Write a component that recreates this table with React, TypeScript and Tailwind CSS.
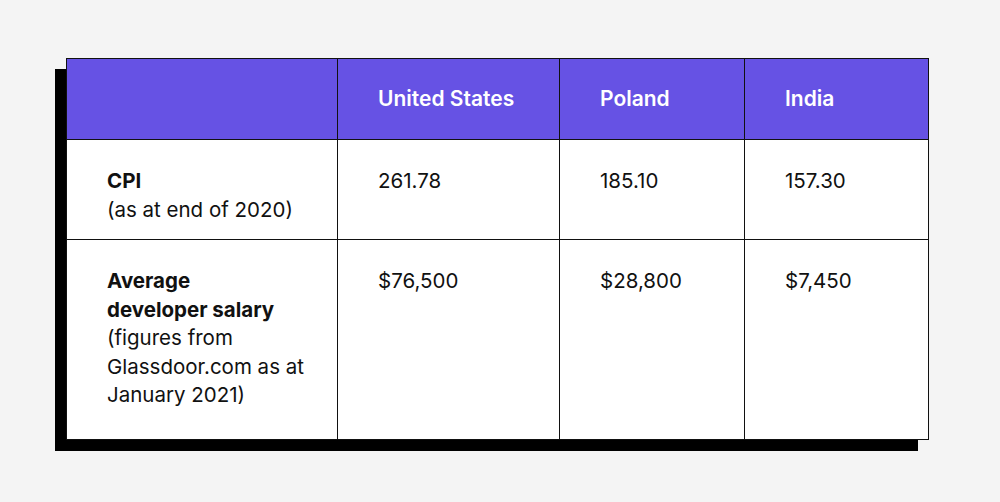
import React from 'react';

const headers = ['United States', 'Poland', 'India'];

const rows = [
  {
    label: ['CPI'],
    note: ['(as at end of 2020)'],
    values: ['261.78', '185.10', '157.30'],
    height: 'h-[100px]',
  },
  {
    label: ['Average', 'developer salary'],
    note: ['(figures from', 'Glassdoor.com as at', 'January 2021)'],
    values: ['$76,500', '$28,800', '$7,450'],
    height: 'h-[200px]',
  },
];

const App: React.FC = () => {
  return (
    <div
      className="w-[1000px] h-[502px] bg-[#f4f4f4] pt-[58px] pl-[66px] text-[#111111]"
      style={{ fontFamily: 'Inter, "Open Sans", sans-serif' }}
    >
      <div className="w-[863px] border border-[#111111] bg-white shadow-[-11px_11px_0_0_#000000]">
        <div className="grid grid-cols-[270px_222px_185px_184px] bg-[#6652e4] h-[80px]">
          <div />
          {headers.map((h) => (
            <div
              key={h}
              className="border-l border-[#111111] flex items-center pl-[40px] text-white text-[21px] font-semibold"
            >
              {h}
            </div>
          ))}
        </div>

        {rows.map((row, i) => (
          <div
            key={i}
            className={`grid grid-cols-[270px_222px_185px_184px] border-t border-[#111111] ${row.height}`}
          >
            <div className="pl-[40px] pt-[27px] text-[20.5px] leading-[28.6px]">
              {row.label.map((l) => (
                <div key={l} className="font-bold">
                  {l}
                </div>
              ))}
              {row.note.map((n) => (
                <div key={n}>{n}</div>
              ))}
            </div>
            {row.values.map((v) => (
              <div key={v} className="border-l border-[#111111] pl-[40px] pt-[27px] text-[20.5px] leading-[28.6px]">
                {v}
              </div>
            ))}
          </div>
        ))}
      </div>
    </div>
  );
};

export default App;
